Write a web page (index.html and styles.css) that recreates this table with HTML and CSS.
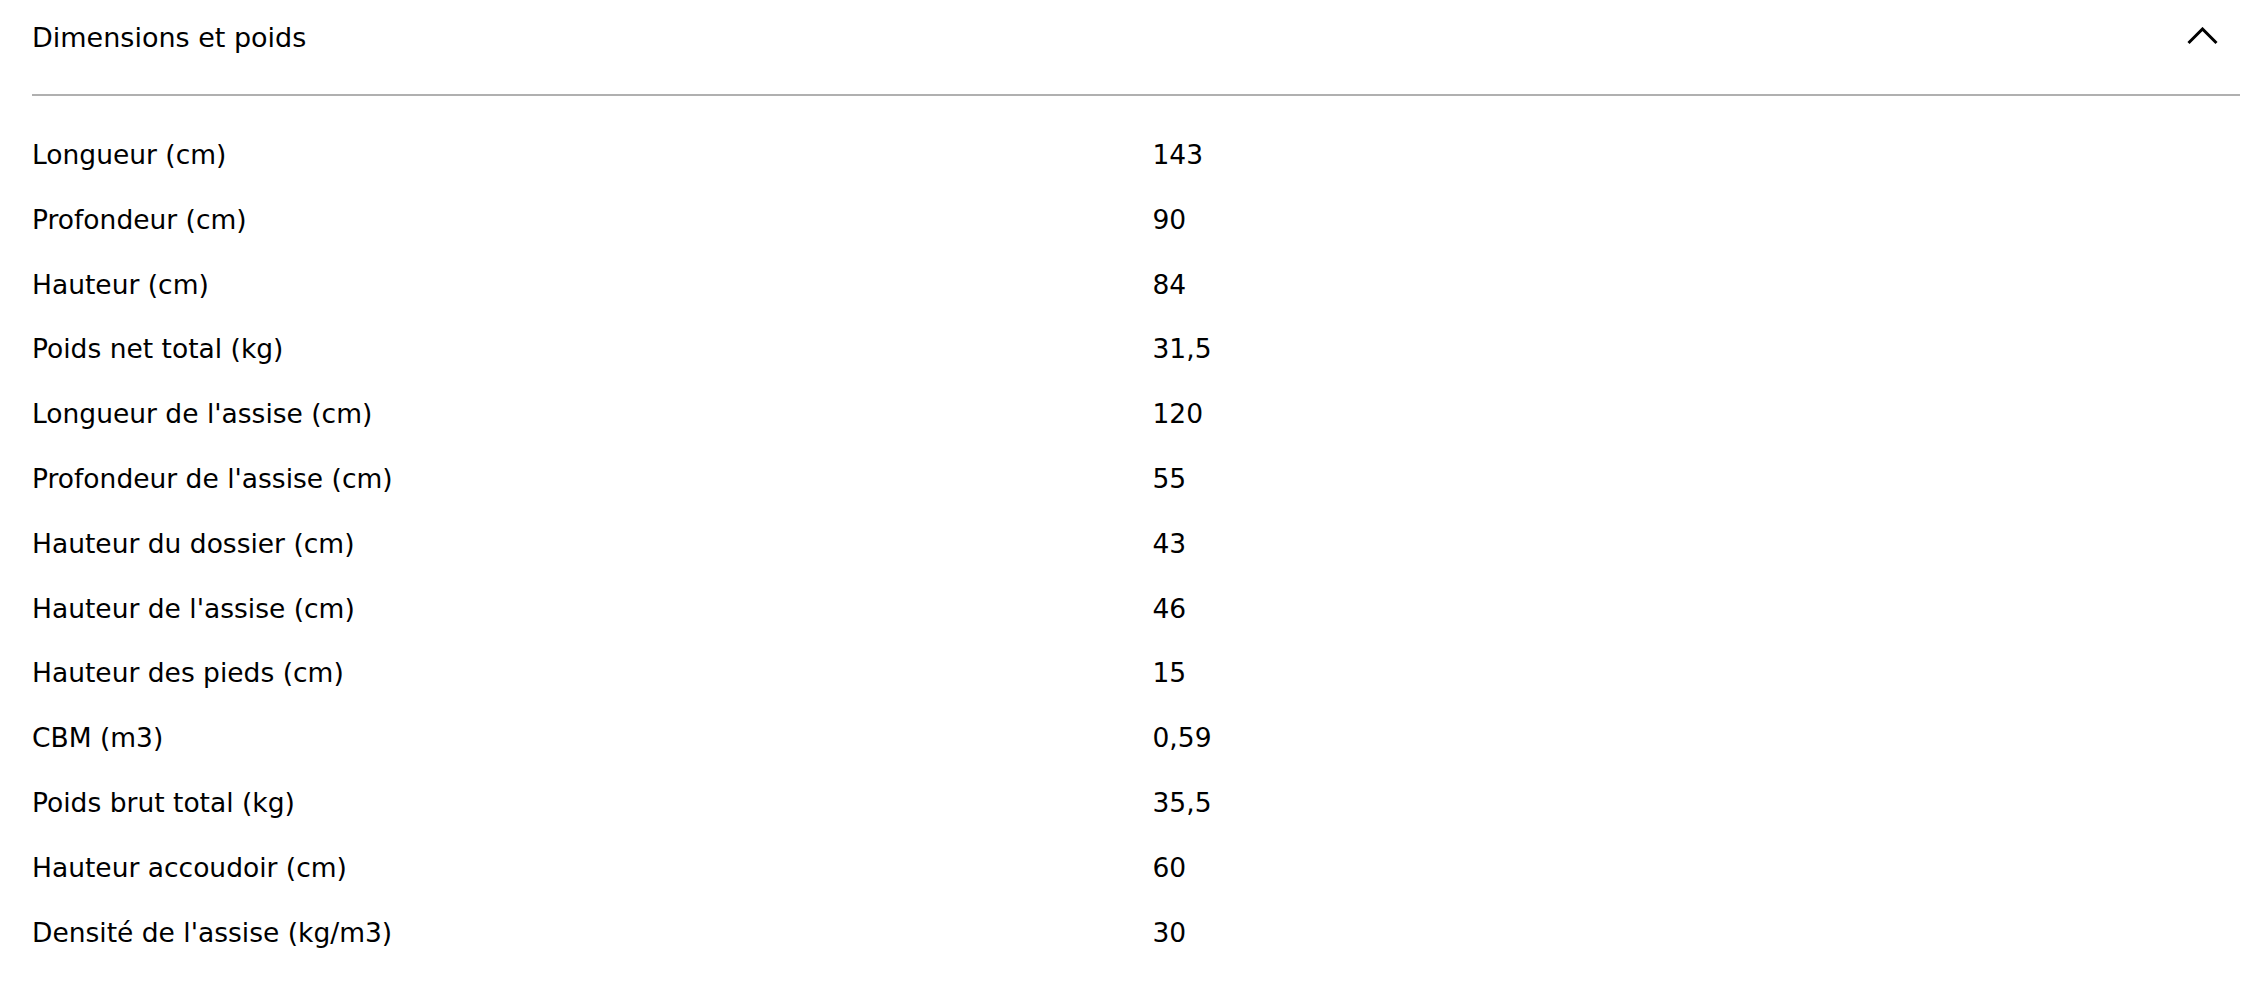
FILE: index.html
```html
<!DOCTYPE html>
<html lang="fr">
<head>
<meta charset="utf-8">
<title>Dimensions et poids</title>
<link rel="stylesheet" href="styles.css">
</head>
<body>
<section class="accordion">
  <div class="acc-header">
    <h2 class="acc-title">Dimensions et poids</h2>
    <svg class="chevron" width="31" height="18" viewBox="0 0 31 18" aria-hidden="true">
      <polyline points="1.5,16 15.5,2 29.5,16" fill="none" stroke="#000" stroke-width="3"/>
    </svg>
  </div>
  <div class="acc-body">
    <div class="spec-table">
      <div class="label">Longueur (cm)</div><div class="value">143</div>
      <div class="label">Profondeur (cm)</div><div class="value">90</div>
      <div class="label">Hauteur (cm)</div><div class="value">84</div>
      <div class="label">Poids net total (kg)</div><div class="value">31,5</div>
      <div class="label">Longueur de l'assise (cm)</div><div class="value">120</div>
      <div class="label">Profondeur de l'assise (cm)</div><div class="value">55</div>
      <div class="label">Hauteur du dossier (cm)</div><div class="value">43</div>
      <div class="label">Hauteur de l'assise (cm)</div><div class="value">46</div>
      <div class="label">Hauteur des pieds (cm)</div><div class="value">15</div>
      <div class="label">CBM (m3)</div><div class="value">0,59</div>
      <div class="label">Poids brut total (kg)</div><div class="value">35,5</div>
      <div class="label">Hauteur accoudoir (cm)</div><div class="value">60</div>
      <div class="label">Densité de l'assise (kg/m3)</div><div class="value">30</div>
    </div>
  </div>
</section>
</body>
</html>
```
FILE: styles.css
```css
html, body {
  margin: 0;
  padding: 0;
  background: #fff;
}
body {
  font-family: "DejaVu Sans", "Liberation Sans", sans-serif;
  color: #000;
}
.accordion {
  padding: 0 26px 0 32px;
}
.acc-header {
  display: flex;
  justify-content: space-between;
  align-items: center;
  padding: 18px 22px 36px 0;
  border-bottom: 2px solid #b0b0b0;
}
.acc-title {
  margin: 0;
  font-size: 27px;
  font-weight: normal;
  line-height: 40px;
}
.chevron {
  display: block;
  margin-top: -5px;
}
.acc-body {
  padding-top: 27px;
}
.spec-table {
  display: grid;
  grid-template-columns: 1fr 1fr;
  column-gap: 33px;
  font-size: 26.5px;
  line-height: 64.8px;
}
.label, .value {
  white-space: nowrap;
}
```
